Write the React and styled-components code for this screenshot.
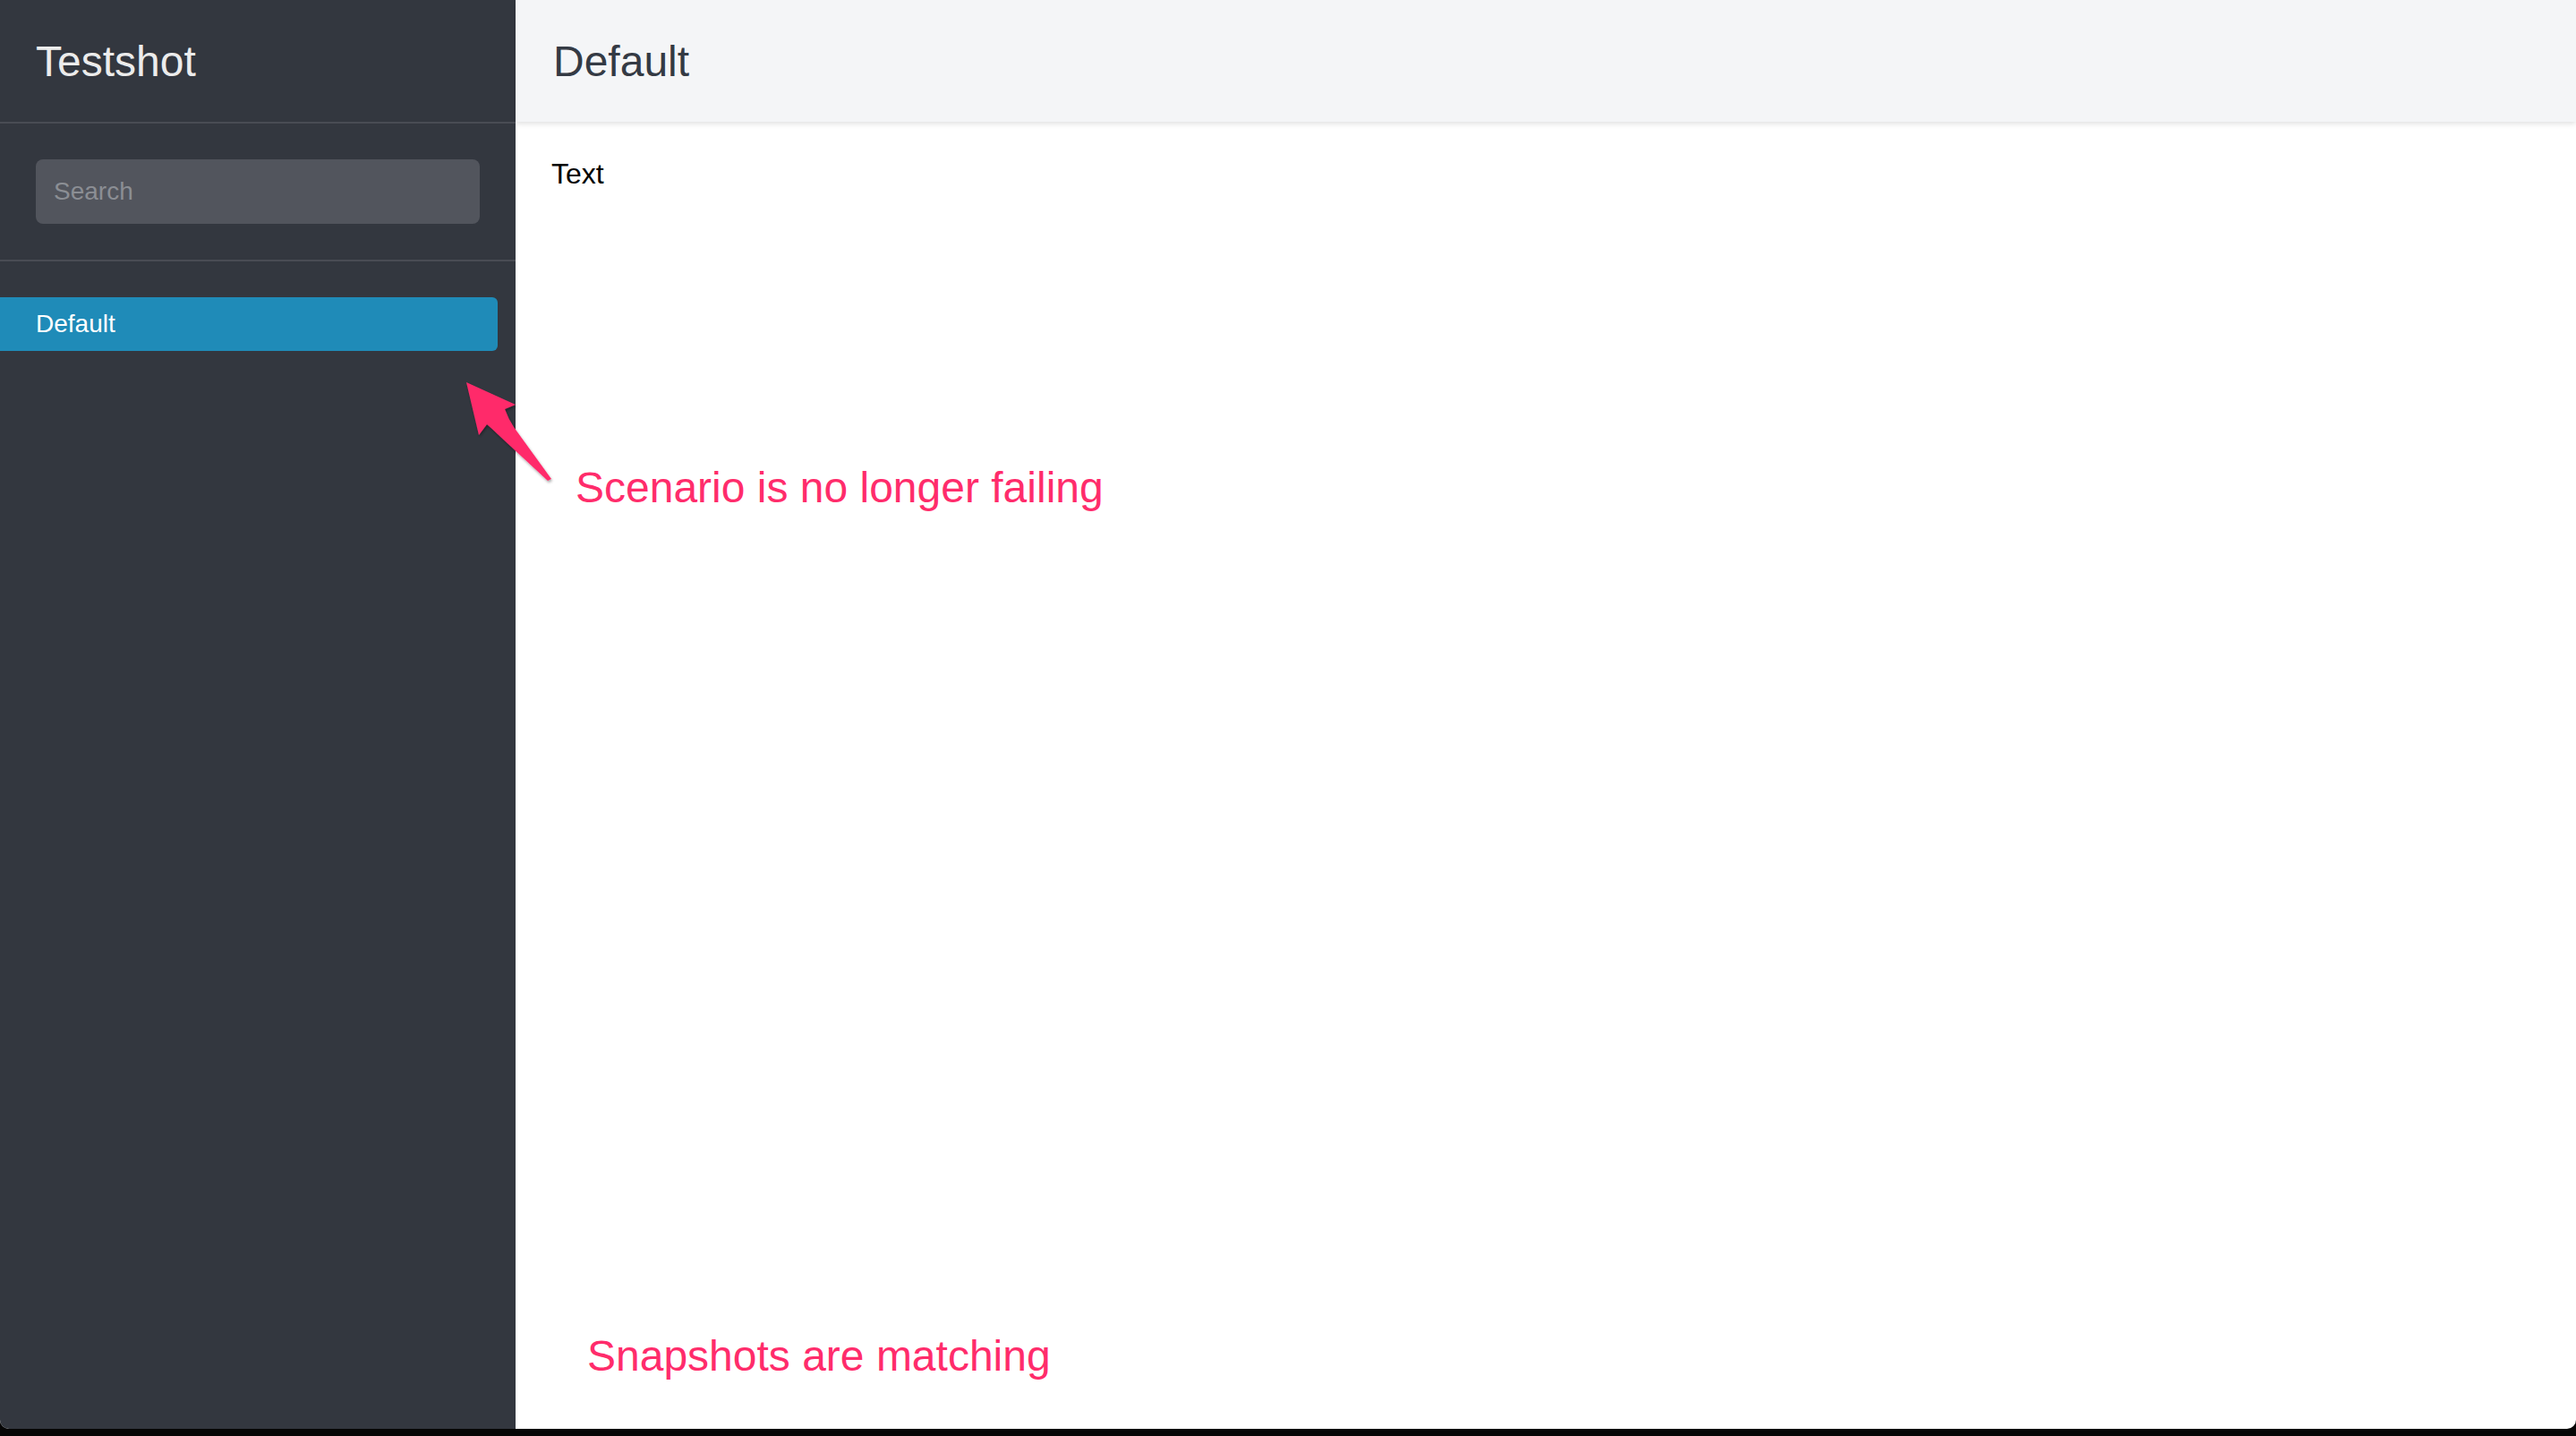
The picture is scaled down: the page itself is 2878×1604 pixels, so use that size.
import React from "react";
import styled, { createGlobalStyle } from "styled-components";

const GlobalStyle = createGlobalStyle`
  html, body {
    margin: 0;
    padding: 0;
    background: #060606;
    font-family: "Liberation Sans", Arial, sans-serif;
  }
`;

const Screen = styled.div`
  width: 2878px;
  height: 1604px;
  background: #060606;
  overflow: hidden;
`;

const Window = styled.div`
  position: relative;
  display: flex;
  height: 1596px;
  background: #ffffff;
  border-bottom-left-radius: 10px;
  border-bottom-right-radius: 10px;
  overflow: hidden;
`;

const Sidebar = styled.aside`
  width: 576px;
  flex-shrink: 0;
  background: #33373f;
  display: flex;
  flex-direction: column;
`;

const Brand = styled.div`
  height: 136px;
  display: flex;
  align-items: center;
  padding-left: 40px;
  border-bottom: 2px solid #494c54;
  color: #ececec;
  font-size: 48px;
`;

const SearchBox = styled.div`
  padding: 40px;
  border-bottom: 2px solid #494c54;
`;

const SearchInput = styled.input`
  box-sizing: border-box;
  width: 496px;
  height: 72px;
  border: none;
  outline: none;
  border-radius: 8px;
  background: #52555d;
  padding: 0 20px;
  font-family: "Liberation Sans", Arial, sans-serif;
  font-size: 28px;
  color: #ffffff;

  &::placeholder {
    color: #8b8e94;
  }
`;

const List = styled.nav`
  padding-top: 40px;
  display: flex;
  flex-direction: column;
`;

const Item = styled.div`
  width: 556px;
  height: 60px;
  box-sizing: border-box;
  display: flex;
  align-items: center;
  padding-left: 40px;
  font-size: 28px;
  color: ${(p) => (p.active ? "#ffffff" : "#c7c9cd")};
  background: ${(p) => (p.active ? "#1f8bb8" : "transparent")};
  border-radius: 0 6px 6px 0;
`;

const Main = styled.main`
  flex: 1;
  display: flex;
  flex-direction: column;
`;

const Header = styled.header`
  height: 136px;
  display: flex;
  align-items: center;
  padding-left: 42px;
  background: #f4f5f7;
  box-shadow: 0 2px 6px rgba(0, 0, 0, 0.13);
  color: #343a44;
  font-size: 48px;
  position: relative;
  z-index: 1;
`;

const Content = styled.div`
  padding: 40px 40px;
  font-size: 32px;
  color: #000000;
`;

const Note = styled.div`
  position: absolute;
  left: ${(p) => p.x}px;
  top: ${(p) => p.y}px;
  font-size: 48px;
  line-height: 1;
  color: #ff2c6b;
  white-space: nowrap;
  z-index: 2;
`;

const Arrow = styled.svg`
  position: absolute;
  left: 500px;
  top: 410px;
  z-index: 2;
  overflow: visible;
`;

const App = () => {
  return (
    <Screen>
      <GlobalStyle />
      <Window>
        <Sidebar>
          <Brand>Testshot</Brand>
          <SearchBox>
            <SearchInput placeholder="Search" />
          </SearchBox>
          <List>
            <Item active>Default</Item>
          </List>
        </Sidebar>
        <Main>
          <Header>Default</Header>
          <Content>Text</Content>
        </Main>

        <Arrow width="140" height="140" viewBox="0 0 140 140">
          <defs>
            <filter id="arrowShadow" x="-20%" y="-20%" width="140%" height="140%">
              <feDropShadow dx="1" dy="2" stdDeviation="1.5" floodColor="#000" floodOpacity="0.35" />
            </filter>
          </defs>
          <path
            d="M21 17 L76 42 L64 47 Q68 58 74 67 L116 125 L112 127 L56 75 Q50 69 44 64 L35 76 Z"
            fill="#ff2c6b"
            filter="url(#arrowShadow)"
          />
        </Arrow>
        <Note x={643} y={521}>Scenario is no longer failing</Note>
        <Note x={656} y={1491}>Snapshots are matching</Note>
      </Window>
    </Screen>
  );
};

export default App;
